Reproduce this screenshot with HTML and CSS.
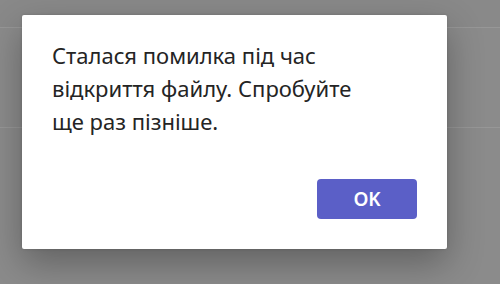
FILE: index.html
```html
<!DOCTYPE html>
<html lang="uk">
<head>
  <meta charset="UTF-8">
  <meta name="viewport" content="width=device-width, initial-scale=1.0">
  <title>Помилка</title>
  <link rel="stylesheet" href="styles.css">
</head>
<body>
  <!-- Page behind the dimmed overlay -->
  <div class="page">
    <div class="page-header"></div>
    <div class="page-section"></div>
  </div>

  <div class="overlay">
    <div class="dialog" role="alertdialog">
      <p class="dialog-message">Сталася помилка під час відкриття файлу. Спробуйте ще раз пізніше.</p>
      <div class="dialog-actions">
        <button class="btn-primary" type="button">OK</button>
      </div>
    </div>
  </div>
</body>
</html>
```

FILE: styles.css
```css
/* Whole window */
body {
  margin: 0;
  padding: 0;
  width: 500px;
  height: 284px;
  overflow: hidden;
  position: relative;
  font-family: "Noto Sans", "Open Sans", sans-serif;
  background-color: #8b8b8b;
}

.page-header {
  height: 27px;
  border-bottom: 1px solid #979797;
  background-color: #898989;
}

.page-section {
  height: 99px;
  border-bottom: 1px solid #979797;
}

/* Dimmed layer with the dialog on top */
.overlay {
  position: absolute;
  top: 15px;
  left: 22px;
}

.dialog {
  width: 365px;
  height: 180px;
  padding: 24px 30px 30px 30px;
  background: #fff;
  border-radius: 2px;
  box-shadow: 0 0 3px rgba(0, 0, 0, 0.15), 0 14px 36px rgba(0, 0, 0, 0.3);
  display: flex;
  flex-direction: column;
}

.dialog-message {
  margin: 0;
  max-width: 330px;
  font-size: 22px;
  line-height: 33px;
  color: #242424;
}

.dialog-actions {
  margin-top: auto;
  display: flex;
  justify-content: flex-end;
}

.btn-primary {
  width: 100px;
  height: 40px;
  border: none;
  border-radius: 4px;
  background-color: #5b5fc7;
  color: #fff;
  font-family: inherit;
  font-size: 19px;
  font-weight: 600;
  cursor: pointer;
}

.btn-primary:hover {
  background-color: #4f52b2;
}
```
